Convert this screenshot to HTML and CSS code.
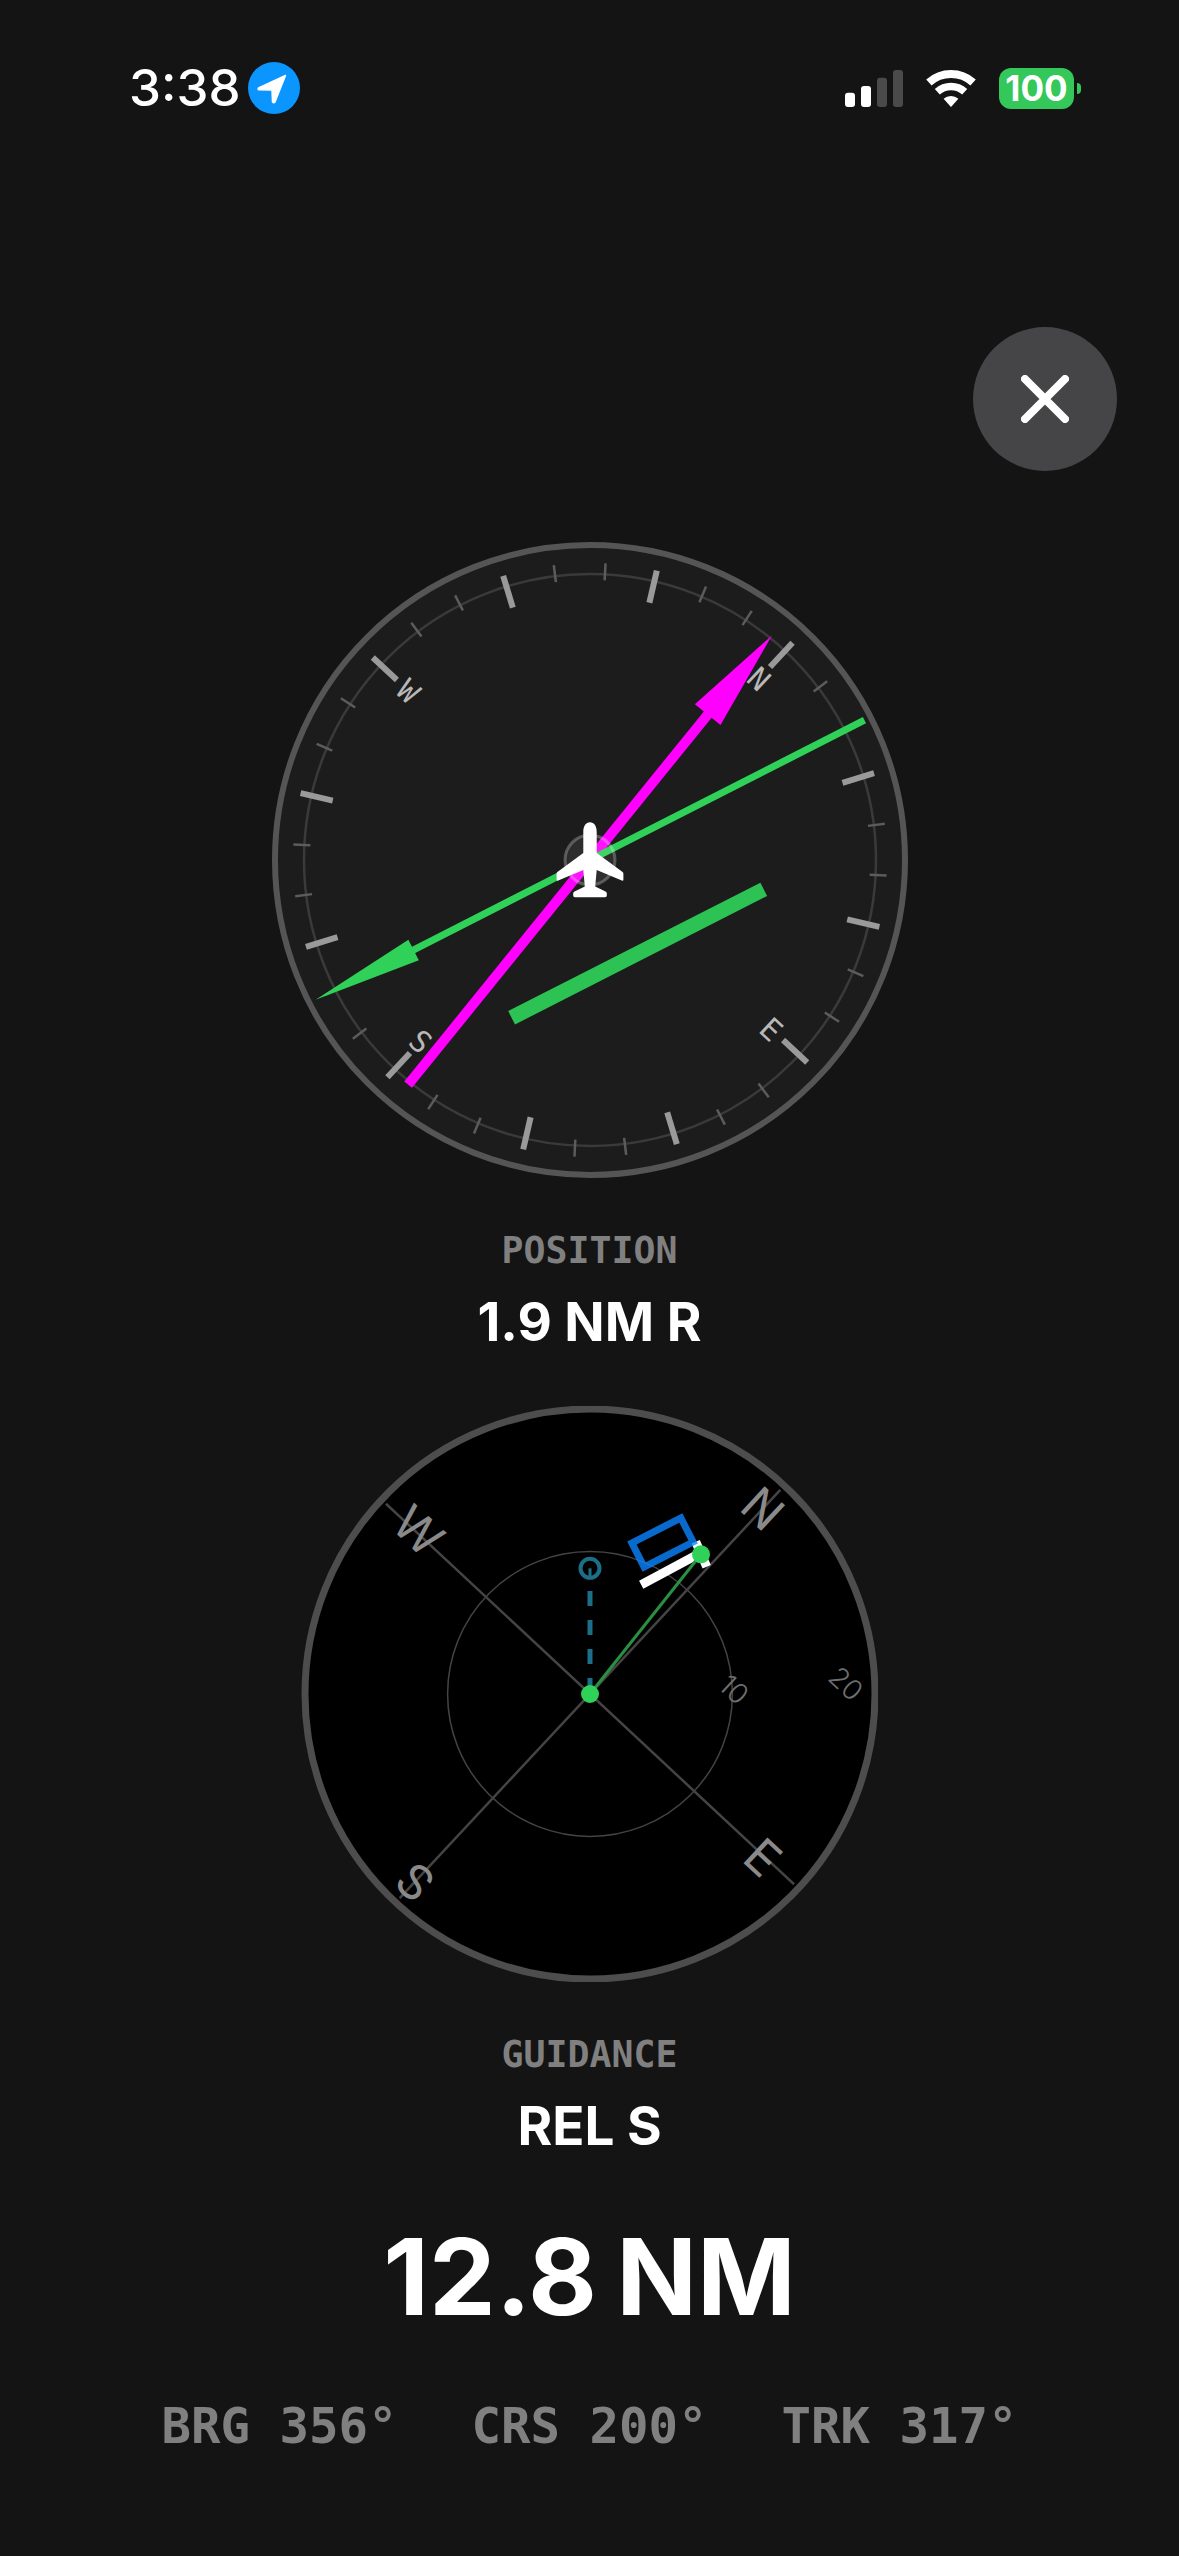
FILE: index.html
```html
<!DOCTYPE html>
<html lang="en">
<head>
    <meta charset="UTF-8">
    <meta name="viewport" content="width=device-width, initial-scale=1.0">
    <title>Approach Guidance</title>
    <link rel="stylesheet" href="styles.css">
</head>
<body>
    <header class="status-bar">
        <div class="status-left">
            <span class="time">3:38</span>
            <svg class="location" width="52" height="52" viewBox="0 0 52 52">
                <circle cx="26" cy="26" r="26" fill="#0a95ff"/>
                <path d="M37.5 13.5 L10.5 26 Q9.5 27.5 11 27.7 L24 28 L24.5 40 Q26 41.5 27 40 Z" fill="#fff" stroke="#fff" stroke-width="1.5" stroke-linejoin="round"/>
            </svg>
        </div>
        <div class="status-right">
            <svg class="signal" width="58" height="37" viewBox="0 0 58 37">
                <rect class="bar-on" x="0" y="22.7" width="10" height="14.3" rx="3"/>
                <rect class="bar-on" x="16" y="16" width="10" height="21" rx="3"/>
                <rect class="bar-off" x="32" y="7.7" width="10" height="29.3" rx="3"/>
                <rect class="bar-off" x="48" y="0" width="10" height="37" rx="3"/>
            </svg>
            <svg class="wifi" width="50" height="37" viewBox="0 0 50 37">
                <path class="wifi-arc" stroke-width="8" d="M2.9 12.5 A33 33 0 0 1 47.1 12.5"/>
                <path class="wifi-arc" stroke-width="7.5" d="M11.3 21.8 A20.5 20.5 0 0 1 38.7 21.8"/>
                <path class="wifi-dot" d="M25 37 L17.6 28.8 A11 11 0 0 1 32.4 28.8 Z"/>
            </svg>
            <div class="battery">
                <span class="battery-body">100</span>
                <span class="battery-cap"></span>
            </div>
        </div>
    </header>

    <div class="close-row">
        <button class="close-btn" aria-label="Close">
            <svg width="48" height="48" viewBox="0 0 48 48">
                <path d="M4 4 L44 44 M44 4 L4 44" stroke="#fff" stroke-width="8" stroke-linecap="round"/>
            </svg>
        </button>
    </div>

    <main class="panel">
        <!-- HSI -->
        <svg class="hsi" width="641" height="640" viewBox="-321 -320 641 640">
            <defs>
                <line id="tick-major" class="tick-major" y1="-297" y2="-264"/>
                <line id="tick-minor" class="tick-minor" y1="-297" y2="-280"/>
            </defs>
            <circle class="hsi-face" r="315"/>
            <circle class="hsi-inner" r="286"/>
            <g transform="rotate(43)">
                <use href="#tick-major"/>
                <use href="#tick-minor" transform="rotate(10)"/>
                <use href="#tick-minor" transform="rotate(20)"/>
                <use href="#tick-major" transform="rotate(30)"/>
                <use href="#tick-minor" transform="rotate(40)"/>
                <use href="#tick-minor" transform="rotate(50)"/>
                <use href="#tick-major" transform="rotate(60)"/>
                <use href="#tick-minor" transform="rotate(70)"/>
                <use href="#tick-minor" transform="rotate(80)"/>
                <use href="#tick-major" transform="rotate(90)"/>
                <use href="#tick-minor" transform="rotate(100)"/>
                <use href="#tick-minor" transform="rotate(110)"/>
                <use href="#tick-major" transform="rotate(120)"/>
                <use href="#tick-minor" transform="rotate(130)"/>
                <use href="#tick-minor" transform="rotate(140)"/>
                <use href="#tick-major" transform="rotate(150)"/>
                <use href="#tick-minor" transform="rotate(160)"/>
                <use href="#tick-minor" transform="rotate(170)"/>
                <use href="#tick-major" transform="rotate(180)"/>
                <use href="#tick-minor" transform="rotate(190)"/>
                <use href="#tick-minor" transform="rotate(200)"/>
                <use href="#tick-major" transform="rotate(210)"/>
                <use href="#tick-minor" transform="rotate(220)"/>
                <use href="#tick-minor" transform="rotate(230)"/>
                <use href="#tick-major" transform="rotate(240)"/>
                <use href="#tick-minor" transform="rotate(250)"/>
                <use href="#tick-minor" transform="rotate(260)"/>
                <use href="#tick-major" transform="rotate(270)"/>
                <use href="#tick-minor" transform="rotate(280)"/>
                <use href="#tick-minor" transform="rotate(290)"/>
                <use href="#tick-major" transform="rotate(300)"/>
                <use href="#tick-minor" transform="rotate(310)"/>
                <use href="#tick-minor" transform="rotate(320)"/>
                <use href="#tick-major" transform="rotate(330)"/>
                <use href="#tick-minor" transform="rotate(340)"/>
                <use href="#tick-minor" transform="rotate(350)"/>
                <text class="hsi-label" x="0" y="-237">N</text>
                <text class="hsi-label" x="248" y="11">E</text>
                <text class="hsi-label" x="0" y="259">S</text>
                <text class="hsi-label" x="-248" y="11">W</text>
            </g>
            <!-- bearing pointer -->
            <g transform="rotate(39)">
                <rect class="magenta" x="-5" y="-200" width="10" height="489"/>
                <polygon class="magenta" points="0,-289 16.5,-187 -16.5,-187"/>
            </g>
            <!-- course pointer and deviation bar -->
            <g transform="rotate(243)">
                <rect class="green" x="-3.5" y="-210" width="7" height="518"/>
                <polygon class="green" points="0,-308 11.5,-198 -11.5,-198"/>
            </g>
            <rect class="cdi-bar" x="97.5" y="-141.5" width="15" height="283" transform="rotate(63)"/>
            <circle class="hub" r="25"/>
            <path class="plane" d="M0 -37.7 C4 -37.7 6.7 -34 6.7 -28 L6.7 -7 L32.6 12 Q33.4 12.6 33.4 14 L33.4 19.5 Q33.4 21.2 31.8 20.6 L6.7 10 L5.2 26.5 L15.5 31.5 Q16.8 32.2 16.8 33.5 L16.8 35.5 Q16.8 37.3 15 37.3 L-15 37.3 Q-16.8 37.3 -16.8 35.5 L-16.8 33.5 Q-16.8 32.2 -15.5 31.5 L-5.2 26.5 L-6.7 10 L-31.8 20.6 Q-33.4 21.2 -33.4 19.5 L-33.4 14 Q-33.4 12.6 -32.6 12 L-6.7 -7 L-6.7 -28 C-6.7 -34 -4 -37.7 0 -37.7 Z"/>
        </svg>

        <div class="caption caption-first">POSITION</div>
        <div class="value">1.9 NM R</div>

        <!-- map -->
        <svg class="map" width="577" height="576" viewBox="-289 -288 577 576">
            <circle class="map-face" r="285"/>
            <g transform="rotate(43)">
                <line class="map-axis" y1="-279" y2="279"/>
                <line class="map-axis" x1="-279" x2="279"/>
            </g>
            <circle class="map-range" r="142.4"/>
            <g transform="rotate(43)">
                <text class="map-label" x="0" y="-236">N</text>
                <text class="map-label" x="238" y="19">E</text>
                <text class="map-label" x="0" y="274">S</text>
                <text class="map-label" x="-237" y="15">W</text>
            </g>
            <text class="map-range-label" transform="translate(137 3) rotate(43)">10</text>
            <text class="map-range-label" transform="translate(249 -3) rotate(43)">20</text>

            <line class="teal-dash" x1="0" y1="-103" x2="0" y2="0"/>
            <circle class="teal-ring" cy="-125.7" r="9.5"/>
            <line class="teal-pin" x1="0" y1="-125.7" x2="0" y2="-117"/>

            <path class="ownship" d="M51.2 -109.2 L106.7 -139 M105.7 -152.3 L116.7 -127.3"/>
            <rect class="runway" x="-27.5" y="-13.5" width="55" height="27" transform="translate(72.5 -151.5) rotate(-27)"/>
            <line class="track-line" x1="0" y1="0" x2="111" y2="-139.7"/>
            <circle class="dot" cx="111" cy="-139.7" r="9"/>
            <circle class="dot" r="9"/>
        </svg>

        <div class="caption caption-second">GUIDANCE</div>
        <div class="value">REL S</div>
        <div class="distance">12.8 NM</div>

        <div class="data-row">
            <span>BRG 356°</span>
            <span>CRS 200°</span>
            <span>TRK 317°</span>
        </div>
    </main>
</body>
</html>
```
FILE: styles.css
```css
html, body {
    margin: 0;
    padding: 0;
}
body {
    width: 1179px;
    height: 2556px;
    overflow: hidden;
    background-color: #141414;
    color: #fff;
    font-family: Inter, "Noto Sans", sans-serif;
}
svg {
    display: block;
}
.status-bar {
    display: flex;
    justify-content: space-between;
    align-items: center;
    height: 52px;
    margin-top: 62px;
    padding: 0 98px 0 129px;
}
.status-left {
    display: flex;
    align-items: center;
    gap: 7px;
}
.time {
    font-size: 51px;
    font-weight: 500;
    line-height: 52px;
}
.status-right {
    display: flex;
    align-items: center;
}
.signal {
    margin-right: 23px;
}
.bar-on {
    fill: #fff;
}
.bar-off {
    fill: #4a4a4a;
}
.wifi {
    margin-right: 23px;
}
.wifi-arc {
    fill: none;
    stroke: #fff;
}
.wifi-dot {
    fill: #fff;
}
.battery {
    display: flex;
    align-items: center;
    gap: 3px;
}
.battery-body {
    width: 75px;
    height: 41px;
    background-color: #34c759;
    border-radius: 12px;
    font-size: 35px;
    font-weight: 700;
    line-height: 41px;
    text-align: center;
}
.battery-cap {
    width: 4px;
    height: 11px;
    background-color: #34c759;
    border-radius: 0 6px 6px 0;
}
.close-row {
    display: flex;
    justify-content: flex-end;
    margin-top: 213px;
    padding-right: 62px;
}
.close-btn {
    display: flex;
    align-items: center;
    justify-content: center;
    width: 144px;
    height: 144px;
    padding: 0;
    border: none;
    border-radius: 50%;
    background-color: #454547;
}
.panel {
    display: flex;
    flex-direction: column;
    align-items: center;
}
.hsi {
    margin-top: 69px;
}
.hsi-face {
    fill: #1c1c1c;
    stroke: #555;
    stroke-width: 6;
}
.hsi-inner {
    fill: none;
    stroke: #3a3a3a;
    stroke-width: 2.5;
}
.tick-major {
    stroke: #9a9a9a;
    stroke-width: 6;
}
.tick-minor {
    stroke: #5c5c5c;
    stroke-width: 2.5;
}
.hsi-label {
    fill: #b8b8b8;
    font-family: "DejaVu Sans Mono", monospace;
    font-size: 30px;
    text-anchor: middle;
}
.magenta {
    fill: #ff00ff;
}
.green {
    fill: #30d158;
}
.cdi-bar {
    fill: #2dc254;
}
.hub {
    fill: rgba(255, 255, 255, 0.08);
    stroke: rgba(255, 255, 255, 0.25);
    stroke-width: 3;
}
.plane {
    fill: #fff;
}
.caption {
    height: 40px;
    color: #808080;
    font-family: "DejaVu Sans Mono", monospace;
    font-size: 36.5px;
    font-weight: 700;
    line-height: 40px;
}
.caption-first {
    margin-top: 51px;
}
.caption-second {
    margin-top: 53px;
}
.value {
    height: 60px;
    margin-top: 21px;
    font-size: 53px;
    font-weight: 700;
    line-height: 60px;
}
.map {
    margin-top: 54px;
}
.map-face {
    fill: #000;
    stroke: #4d4d4d;
    stroke-width: 7;
}
.map-axis {
    stroke: #444;
    stroke-width: 2.5;
}
.map-range {
    fill: none;
    stroke: #444;
    stroke-width: 1.5;
}
.map-label {
    fill: #8a8a8a;
    font-size: 48px;
    font-weight: 400;
    text-anchor: middle;
}
.map-range-label {
    fill: #6e6e6e;
    font-size: 28px;
    font-weight: 300;
    text-anchor: middle;
}
.teal-dash {
    stroke: #1c6f88;
    stroke-width: 5;
    stroke-dasharray: 15 14;
}
.teal-ring {
    fill: none;
    stroke: #1c6f88;
    stroke-width: 4;
}
.teal-pin {
    stroke: #1c6f88;
    stroke-width: 3;
}
.ownship {
    fill: none;
    stroke: #fff;
    stroke-width: 9;
}
.runway {
    fill: none;
    stroke: #0a84ff;
    stroke-width: 7;
    opacity: 0.8;
}
.track-line {
    stroke: #2a8f3f;
    stroke-width: 3;
}
.dot {
    fill: #30d158;
}
.distance {
    height: 120px;
    margin-top: 61px;
    font-size: 106px;
    font-weight: 700;
    line-height: 120px;
    word-spacing: -6px;
}
.data-row {
    display: flex;
    gap: 74px;
    margin-top: 60px;
    color: #808080;
    font-family: "DejaVu Sans Mono", monospace;
    font-size: 49px;
    font-weight: 700;
    line-height: 60px;
}
```
